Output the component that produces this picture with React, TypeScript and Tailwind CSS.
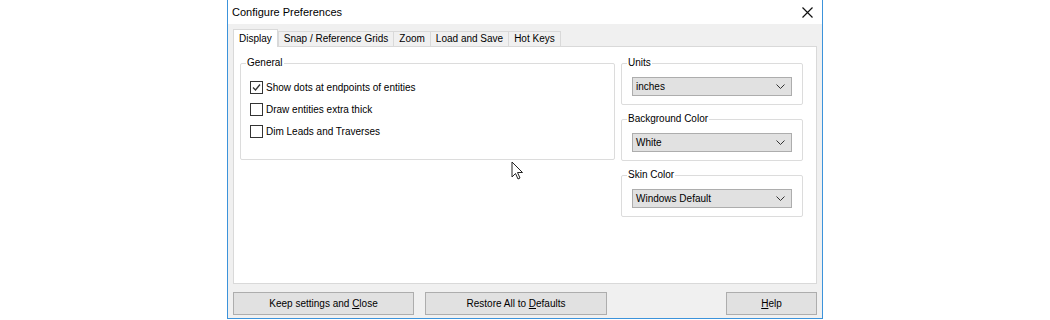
import React from "react";

const font = { fontFamily: '"Liberation Sans", Arial, sans-serif' };

function Tab({ label, active }: { label: string; active?: boolean }) {
  if (active) {
    return (
      <div className="relative z-10 -mb-px border border-b-0 border-[#d9d9d9] bg-white px-[5px] pb-[2px] pt-[3px] text-[10px] leading-[12px] text-black">
        {label}
      </div>
    );
  }
  return (
    <div className="border border-b-0 border-l-0 border-[#d9d9d9] bg-[#f0f0f0] px-[5px] py-[1px] text-[10px] leading-[12px] text-black">
      {label}
    </div>
  );
}

function Check({ label, checked }: { label: string; checked?: boolean }) {
  return (
    <div className="flex h-[22px] items-center gap-[3px]">
      <div className="flex h-[13px] w-[13px] items-center justify-center border border-[#333] bg-white">
        {checked && (
          <svg width="11" height="11" viewBox="0 0 11 11">
            <path d="M2 5.5 L4.5 8 L9 2.5" fill="none" stroke="#333" strokeWidth="1.3" />
          </svg>
        )}
      </div>
      <span className="text-[10px] text-black">{label}</span>
    </div>
  );
}

function Group({ title, className, children }: { title: string; className?: string; children?: React.ReactNode }) {
  return (
    <div className={`relative rounded-[2px] border border-[#dcdcdc] ${className ?? ""}`}>
      <span className="absolute -top-[7px] left-[5px] bg-white px-[1px] text-[10px] leading-[12px] text-black">
        {title}
      </span>
      {children}
    </div>
  );
}

function Select({ value }: { value: string }) {
  return (
    <div className="flex h-[19px] items-center justify-between border border-[#adadad] bg-[#e1e1e1] pl-[3px] pr-[6px] text-[10px] text-black">
      <span>{value}</span>
      <svg width="9" height="6" viewBox="0 0 9 6">
        <path d="M0.5 0.5 L4.5 4.5 L8.5 0.5" fill="none" stroke="#333" strokeWidth="1" />
      </svg>
    </div>
  );
}

function Button({ children, className }: { children: React.ReactNode; className?: string }) {
  return (
    <div className={`flex h-[23px] items-center justify-center border border-[#adadad] bg-[#e1e1e1] text-[10px] text-black ${className ?? ""}`}>
      {children}
    </div>
  );
}

export default function App() {
  return (
    <div className="h-[320px] w-[1050px] bg-white" style={font}>
      <div className="ml-[227px] flex h-[319px] w-[596px] flex-col border border-t-0 border-[#3c93db] bg-[#f0f0f0]">
        {/* title bar */}
        <div className="flex h-[24px] items-center justify-between bg-white pl-[4px] pr-[9px]">
          <span className="text-[11px] text-black">Configure Preferences</span>
          <svg width="11" height="11" viewBox="0 0 11 11">
            <path d="M0.5 0.5 L10.5 10.5 M10.5 0.5 L0.5 10.5" stroke="#111" strokeWidth="1.2" />
          </svg>
        </div>

        {/* tabs */}
        <div className="mt-[5px] flex h-[17px] items-end pl-[5px]">
          <Tab label="Display" active />
          <div className="h-[15px] border-l border-[#d9d9d9]" />
          <Tab label="Snap / Reference Grids" />
          <Tab label="Zoom" />
          <Tab label="Load and Save" />
          <Tab label="Hot Keys" />
        </div>

        {/* panel */}
        <div className="mx-[5px] flex h-[238px] gap-[6px] border border-[#d9d9d9] bg-white pl-[6px] pr-[13px] pt-[16px]">
          <Group title="General" className="h-[97px] w-[375px] pl-[9px] pt-[12px]">
            <Check label="Show dots at endpoints of entities" checked />
            <Check label="Draw entities extra thick" />
            <Check label="Dim Leads and Traverses" />
          </Group>

          <div className="flex flex-1 flex-col gap-[14px]">
            <Group title="Units" className="h-[42px] px-[10px] pt-[13px]">
              <Select value="inches" />
            </Group>
            <Group title="Background Color" className="h-[42px] px-[10px] pt-[13px]">
              <Select value="White" />
            </Group>
            <Group title="Skin Color" className="h-[42px] px-[10px] pt-[13px]">
              <Select value="Windows Default" />
            </Group>
          </div>
        </div>

        {/* buttons */}
        <div className="mt-[8px] flex px-[5px]">
          <Button className="w-[181px]">
            <span>
              Keep settings and <u>C</u>lose
            </span>
          </Button>
          <Button className="ml-[11px] w-[182px]">
            <span>
              Restore All to <u>D</u>efaults
            </span>
          </Button>
          <Button className="ml-auto w-[91px]">
            <span>
              <u>H</u>elp
            </span>
          </Button>
        </div>
      </div>

      {/* mouse cursor */}
      <svg className="absolute left-[511px] top-[161px]" width="13" height="20" viewBox="0 0 13 20">
        <path d="M1 1 L1 16 L4.5 12.5 L7 18 L9 17 L6.5 11.5 L11.5 11.5 Z" fill="white" stroke="#222" strokeWidth="1" />
      </svg>
    </div>
  );
}
